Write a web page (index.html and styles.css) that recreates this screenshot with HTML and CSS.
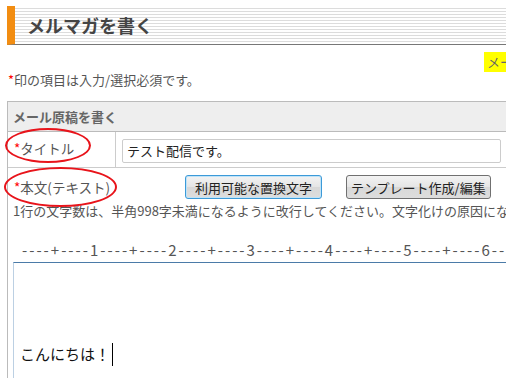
FILE: index.html
```html
<!DOCTYPE html>
<html lang="ja">
<head>
    <meta charset="UTF-8">
    <meta name="viewport" content="width=device-width, initial-scale=1.0">
    <title>メルマガを書く</title>
    <link rel="stylesheet" href="styles.css">
</head>
<body>
    <div class="page">
        <h1 class="page-title">メルマガを書く</h1>

        <div class="help-row">
            <a class="help-link" href="#">メールマガジンの書き方</a>
        </div>

        <p class="note"><span class="req">*</span>印の項目は入力/選択必須です。</p>

        <div class="form">
            <div class="section">メール原稿を書く</div>

            <div class="row">
                <div class="label"><span class="req">*</span>タイトル</div>
                <div class="field">
                    <input type="text" class="title-input" value="テスト配信です。">
                </div>
            </div>

            <div class="body-cell">
                <div class="body-head">
                    <div class="body-label"><span class="req">*</span>本文(テキスト)</div>
                    <button class="btn btn-focus">利用可能な置換文字</button>
                    <button class="btn">テンプレート作成/編集</button>
                </div>
                <p class="hint">1行の文字数は、半角998字未満になるように改行してください。文字化けの原因になります。</p>
                <div class="ruler">----+----1----+----2----+----3----+----4----+----5----+----6----+----7</div>
                <div class="editor">



こんにちは！<span class="caret"></span></div>
            </div>

            <!-- red marks over the required labels -->
            <span class="mark mark-title"></span>
            <span class="mark mark-body"></span>
        </div>
    </div>
</body>
</html>
```

FILE: styles.css
```css
* {
    margin: 0;
    padding: 0;
    box-sizing: border-box;
}

body {
    font-family: 'Noto Sans CJK JP', 'Noto Sans', sans-serif;
    background-color: #fff;
    color: #555;
    overflow: hidden;
}

.page {
    width: 760px;
    padding: 6px 0 0 7px;
}

.page-title {
    height: 39px;
    padding-left: 12px;
    font-size: 18px;
    font-weight: bold;
    line-height: 38px;
    color: #444;
    border-left: 8px solid #f28d12;
    border-bottom: 1px solid #777;
    background: repeating-linear-gradient(to bottom, #fff 0px, #fff 2px, #dcdcdc 2px, #dcdcdc 3px);
}

.help-row {
    height: 20px;
    margin-top: 3px;
    padding-left: 477px;
    white-space: nowrap;
}

.help-link {
    display: inline-block;
    height: 20px;
    padding: 0 3px;
    background-color: #ffff00;
    color: #666;
    font-size: 13px;
    line-height: 20px;
    text-decoration: none;
}

.note {
    margin: 2px 0 11px 1px;
    font-size: 13px;
    line-height: 20px;
}

.req {
    color: #f00;
}

.form {
    position: relative;
    border: 1px solid #bbb;
    border-bottom: none;
    padding-bottom: 40px;
}

.section {
    height: 30px;
    padding-left: 5px;
    background-color: #eee;
    border-bottom: 1px solid #bbb;
    font-size: 13px;
    font-weight: bold;
    line-height: 29px;
    color: #666;
}

.row {
    display: flex;
    height: 36px;
    border-bottom: 1px solid #ccc;
}

.label {
    width: 108px;
    padding-left: 6px;
    border-right: 1px solid #ccc;
    font-size: 13.5px;
    line-height: 32px;
}

.field {
    padding: 5px 0 0 6px;
}

.title-input {
    width: 379px;
    height: 24px;
    padding: 0 4px;
    border: 1px solid #ccc;
    border-radius: 2px;
    font-family: inherit;
    font-size: 13px;
    color: #222;
}

.body-cell {
    padding: 7px 0 0 5px;
}

.body-head {
    display: flex;
    align-items: center;
    gap: 24px;
}

.body-label {
    width: 148px;
    padding-left: 1px;
    font-size: 13.5px;
}

.btn {
    height: 24px;
    padding: 0 4px;
    font-family: inherit;
    font-size: 13px;
    color: #222;
    background: linear-gradient(to bottom, #f3f3f3, #e5e5e5 50%, #d8d8d8 51%, #dddddd);
    border: 1px solid #707070;
    border-radius: 3px;
}

.btn-focus {
    width: 137px;
    border-color: #3c9ad8;
    box-shadow: inset 0 0 0 1px #bfe3f8;
}

.hint {
    margin-top: 4px;
    font-size: 13px;
    line-height: 16px;
    white-space: nowrap;
}

.ruler {
    margin: 21px 0 0 9px;
    font-size: 15px;
    letter-spacing: 2px;
    line-height: 20px;
    color: #555;
    white-space: nowrap;
}

.editor {
    height: 140px;
    margin-top: 2px;
    padding: 0 0 0 6px;
    border: 1px solid #bcd0e3;
    border-top-color: #4b7ba8;
    font-size: 15px;
    line-height: 20px;
    color: #111;
    white-space: pre-wrap;
}

.caret {
    display: inline-block;
    width: 1px;
    height: 23px;
    margin-left: 2px;
    vertical-align: -6px;
    background-color: #000;
}

.mark {
    position: absolute;
    border: 2px solid #e8141b;
    border-radius: 50%;
}

.mark-title {
    left: -3px;
    top: 26px;
    width: 86px;
    height: 35px;
}

.mark-body {
    left: -4px;
    top: 65px;
    width: 113px;
    height: 40px;
}
```
